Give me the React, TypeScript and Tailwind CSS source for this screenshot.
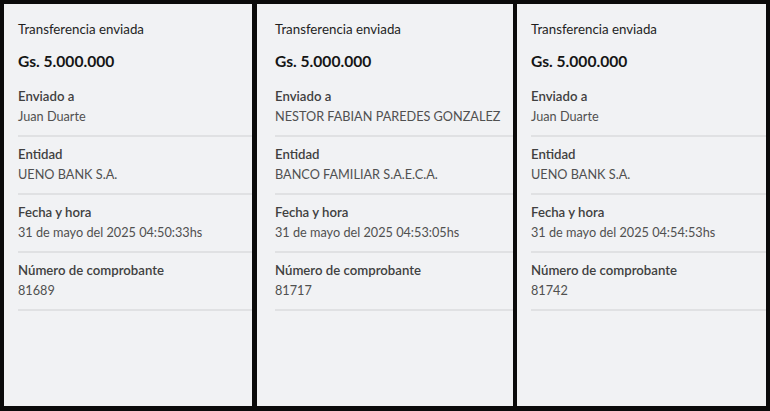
import React from "react";

type Item = { label: string; value: string };
type Receipt = { w: string; pl: string; items: Item[] };

const receipts: Receipt[] = [
  {
    w: "w-[248px]",
    pl: "pl-[14px]",
    items: [
      { label: "Enviado a", value: "Juan Duarte" },
      { label: "Entidad", value: "UENO BANK S.A." },
      { label: "Fecha y hora", value: "31 de mayo del 2025 04:50:33hs" },
      { label: "Número de comprobante", value: "81689" },
    ],
  },
  {
    w: "w-[256px]",
    pl: "pl-[18px]",
    items: [
      { label: "Enviado a", value: "NESTOR FABIAN PAREDES GONZALEZ" },
      { label: "Entidad", value: "BANCO FAMILIAR S.A.E.C.A." },
      { label: "Fecha y hora", value: "31 de mayo del 2025 04:53:05hs" },
      { label: "Número de comprobante", value: "81717" },
    ],
  },
  {
    w: "w-[249px]",
    pl: "pl-[14px]",
    items: [
      { label: "Enviado a", value: "Juan Duarte" },
      { label: "Entidad", value: "UENO BANK S.A." },
      { label: "Fecha y hora", value: "31 de mayo del 2025 04:54:53hs" },
      { label: "Número de comprobante", value: "81742" },
    ],
  },
];

function Panel({ r }: { r: Receipt }) {
  return (
    <div className={`${r.w} ${r.pl} h-[402px] bg-[#f1f2f4] pt-[16px] flex flex-col`}>
      <div className="h-[18px] leading-[18px] text-[13.3px] text-[#1f1f1f]">Transferencia enviada</div>
      <div className="mt-[12px] h-[22px] leading-[22px] text-[15.6px] font-bold text-[#151515]">Gs. 5.000.000</div>
      <div className="mt-[7px] flex flex-col">
        {r.items.map((it) => (
          <div key={it.label} className="flex flex-col">
            <div className="pt-[8px] h-[26px] leading-[18px] text-[13.2px] font-semibold text-[#404040] whitespace-nowrap">
              {it.label}
            </div>
            <div className="mt-[2px] h-[18px] leading-[18px] text-[12.7px] text-[#505050] whitespace-nowrap">
              {it.value}
            </div>
            <div className="mt-[10px] h-[2px] bg-[#e0e1e3]" />
          </div>
        ))}
      </div>
    </div>
  );
}

export default function App() {
  return (
    <div
      className="w-[770px] h-[411px] bg-[#0b0b0b] flex pt-[4px] pl-[4px] gap-[5px]"
      style={{ fontFamily: "Lato, 'Noto Sans', sans-serif" }}
    >
      <Panel r={receipts[0]} />
      <div className="flex gap-[4px]">
        <Panel r={receipts[1]} />
        <Panel r={receipts[2]} />
      </div>
    </div>
  );
}
